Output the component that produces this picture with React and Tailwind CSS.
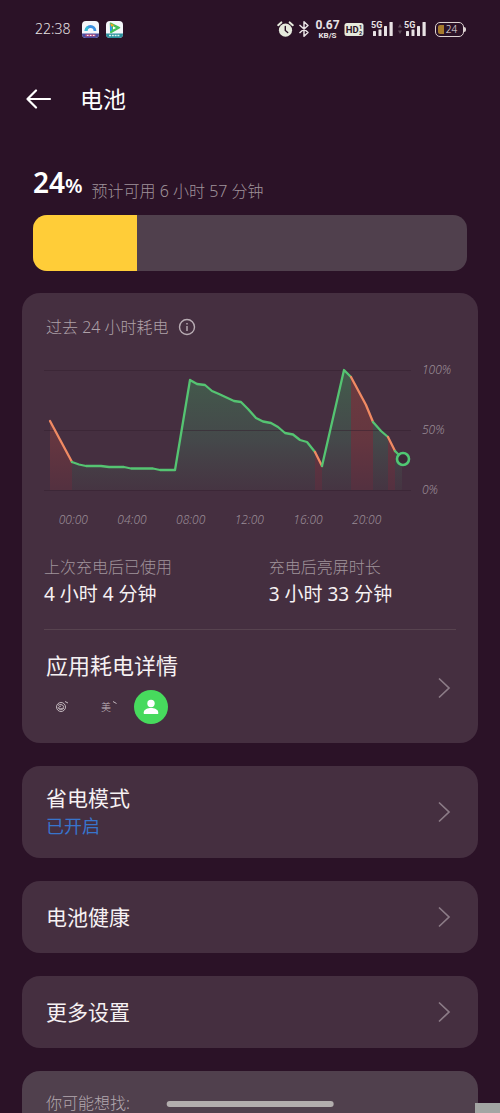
import React from "react";

const LEVELS = [
  { label: "100%", at: "items-start" },
  { label: "50%", at: "items-center" },
  { label: "0%", at: "items-end" },
];

const HOURS = ["00:00", "04:00", "08:00", "12:00", "16:00", "20:00"];

const SEGMENTS = [
  { tone: "heavy", points: [[6, 57], [28, 98]] },
  {
    tone: "normal",
    points: [
      [28, 98], [35, 100.5], [42, 102], [57, 102], [65, 103], [80, 103], [87, 104.5], [109, 104.5],
      [116, 106], [131, 106], [146, 16], [153, 20], [161, 21], [168, 27], [175, 30], [190, 37],
      [197, 38], [204, 45], [212, 54], [219, 57.5], [227, 59], [234, 63], [241, 69], [249, 70.5],
      [256, 76], [263, 78], [271, 88],
    ],
  },
  { tone: "heavy", points: [[271, 88], [278, 102]] },
  { tone: "normal", points: [[278, 102], [300, 6], [307, 13]] },
  { tone: "heavy", points: [[307, 13], [322, 41], [329, 58]] },
  { tone: "normal", points: [[329, 58], [337, 67], [344, 73]] },
  { tone: "heavy", points: [[344, 73], [351, 87]] },
  { tone: "normal", points: [[351, 87], [358, 94]] },
];

const toLine = (points) => points.map(([x, y]) => `${x},${y}`).join(" ");
const toArea = (points) =>
  `${points[0][0]},126 ${toLine(points)} ${points[points.length - 1][0]},126`;

function UsageChart() {
  return (
    <svg viewBox="0 0 368 132" className="block h-auto w-full" role="img" aria-label="过去 24 小时电量曲线">
      <defs>
        <linearGradient id="normal" gradientUnits="userSpaceOnUse" x1="0" y1="6" x2="0" y2="126">
          <stop offset="0" stopColor="#3f9a5c" stopOpacity="0.42" />
          <stop offset="0.6" stopColor="#44705a" stopOpacity="0.38" />
          <stop offset="1" stopColor="#4a6656" stopOpacity="0.1" />
        </linearGradient>
        <linearGradient id="heavy" gradientUnits="userSpaceOnUse" x1="0" y1="6" x2="0" y2="126">
          <stop offset="0" stopColor="#b8543f" stopOpacity="0.34" />
          <stop offset="0.6" stopColor="#a04440" stopOpacity="0.34" />
          <stop offset="1" stopColor="#a03a40" stopOpacity="0.16" />
        </linearGradient>
      </defs>
      {SEGMENTS.map((s, i) => (
        <polygon key={i} points={toArea(s.points)} fill={`url(#${s.tone})`} />
      ))}
      {[6.5, 66.5, 126.5].map((y) => (
        <line key={y} x1="0" x2="367" y1={y} y2={y} stroke="#35202f" strokeWidth="1" opacity="0.5" />
      ))}
      {SEGMENTS.map((s, i) => (
        <polyline
          key={i}
          points={toLine(s.points)}
          fill="none"
          stroke={s.tone === "heavy" ? "#f08a63" : "#55c472"}
          strokeWidth="2.3"
          strokeLinejoin="round"
          strokeLinecap="round"
        />
      ))}
      <circle cx="359" cy="95" r="6" fill="#3a2a37" stroke="#50c873" strokeWidth="2.6" />
    </svg>
  );
}

function Chevron() {
  return (
    <svg viewBox="0 0 14 22" className="mr-[5px] h-[22px] w-[14px] shrink-0" fill="none" stroke="#8c7c87" strokeWidth="1.7" aria-hidden="true">
      <path d="M2 1.5 12 11 2 20.5" />
    </svg>
  );
}

function Signal() {
  return (
    <svg viewBox="0 0 23 18" className="h-[18px] w-[23px]" fill="#e8e2e4" role="img" aria-label="5G 信号">
      <text x="0" y="8" fontSize="9" fontWeight="700" fontFamily="Roboto, sans-serif">5G</text>
      <rect x="2" y="11" width="3" height="5" rx="0.5" />
      <rect x="7.500" y="9.500" width="3" height="6.500" rx="0.5" />
      <rect x="13" y="6" width="3" height="10" rx="0.5" />
      <rect x="18.500" y="2" width="3.200" height="14" rx="0.5" />
    </svg>
  );
}

function StatusBar() {
  return (
    <div className="flex h-[58px] shrink-0 items-center pr-9 pl-[35px] text-[#e8e2e4]">
      <span className="w-[47px] text-sm">22:38</span>
      <svg viewBox="0 0 17 17" className="h-[17px] w-[17px]" aria-hidden="true">
        <rect width="17" height="17" rx="4" fill="#f4f6fa" />
        <path d="M4 10a4.500 4.500 0 1 1 9 0" fill="none" stroke="#3b8fe0" strokeWidth="2.800" />
        <path d="M4 10a4.500 4.500 0 0 1 2.200-3.900" fill="none" stroke="#37bcd0" strokeWidth="2.800" />
        <path d="M0 12.500h17v.5a4 4 0 0 1-4 4H4a4 4 0 0 1-4-4z" fill="#4b4a9c" />
        <path d="M3.500 13.500h10v1.800h-10z" fill="#d9547a" />
        <path d="M5 14.400h1.500M8 14.400h1.500M11 14.400h1.500" stroke="#fff" strokeWidth="1" />
      </svg>
      <svg viewBox="0 0 17 17" className="ml-[7px] h-[17px] w-[17px]" aria-hidden="true">
        <rect width="17" height="17" rx="4" fill="#f4f6fa" />
        <path d="M4.500 2.200 13.500 6.600 4.800 11.500z" fill="#43bf5a" stroke="#43bf5a" strokeWidth="1.500" strokeLinejoin="round" />
        <path d="M4 3v7.500l2-1.200V4z" fill="#2b9be8" />
        <path d="M4.300 2.200 8.500 4.300 5 5.800z" fill="#f5a623" />
        <path d="M7 5.200 10 6.900 7 8.600z" fill="#fff" />
        <path d="M0 12.500h17v.5a4 4 0 0 1-4 4H4a4 4 0 0 1-4-4z" fill="#2a8f9c" />
        <path d="M3 14.500h11" stroke="#d8f3f0" strokeWidth="1.500" strokeDasharray="2 0.800" />
      </svg>
      <div className="ml-auto flex items-center">
        <svg viewBox="0 0 17 17" className="h-[17px] w-[17px]" aria-hidden="true">
          <circle cx="8.500" cy="9.200" r="6.600" fill="#e6eadd" />
          <path d="M1.200 4.200 4.300 1.400M15.800 4.200 12.700 1.400" stroke="#e6eadd" strokeWidth="2" strokeLinecap="round" />
          <path d="M8.300 5.500v4l2.400 2" fill="none" stroke="#2b1227" strokeWidth="1.400" strokeLinecap="round" />
        </svg>
        <svg viewBox="0 0 12 18" className="ml-1 h-[18px] w-[12px]" fill="none" stroke="#e8e2e4" strokeWidth="1.500" strokeLinejoin="round" aria-hidden="true">
          <path d="M1.500 5 10 12.500 6 16.200V1.800L10 5.500 1.500 13" />
        </svg>
        <span className="ml-1.5 flex w-[23px] flex-col items-center font-[Roboto] font-bold">
          <span className="text-[12px] leading-[12px]">0.67</span>
          <span className="text-[8px] leading-[9px]">KB/S</span>
        </span>
        <svg viewBox="0 0 20 13" className="ml-[5px] h-[13px] w-[20px]" role="img" aria-label="HD 1 2">
          <rect x="0.500" width="19" height="13" rx="2.500" fill="#e6eadd" />
          <text x="1.800" y="10.200" fontSize="9.500" fontWeight="700" fontFamily="Roboto, sans-serif" fill="#2b1227">HD</text>
          <text x="15" y="6" fontSize="5.500" fontWeight="700" fontFamily="Roboto, sans-serif" fill="#2b1227">1</text>
          <text x="15" y="11.600" fontSize="5.500" fontWeight="700" fontFamily="Roboto, sans-serif" fill="#2b1227">2</text>
        </svg>
        <span className="ml-[7px] flex"><Signal /></span>
        <svg viewBox="0 0 4 10" className="ml-1 h-[10px] w-[4px]" fill="#5c4a58" aria-hidden="true">
          <path d="M2 0 4 3.500H0zM2 10 0 6.500h4z" />
        </svg>
        <span className="ml-[2px] flex"><Signal /></span>
        <span className="relative ml-2 flex h-[15px] w-[29px] items-center justify-center rounded-[5px] border border-[#ddd2d2]">
          <span className="absolute top-[2px] bottom-[2px] left-[2px] w-[6px] rounded-l-[2px] bg-[#a67a2c]" />
          <span className="relative ml-1 text-[10px] leading-none">24</span>
          <span className="absolute top-1 -right-[3px] h-[5px] w-[2px] rounded-r bg-[#ddd2d2]" />
        </span>
      </div>
    </div>
  );
}

function Stat({ label, value }) {
  return (
    <div>
      <dt className="text-base leading-6 text-[#a0939b]">{label}</dt>
      <dd className="text-[19px] leading-[30px] font-normal text-[#f6f1f3]">{value}</dd>
    </div>
  );
}

function LinkCard({ title, note }) {
  return (
    <a href="#" className="flex items-center rounded-[18px] bg-[#452f40] py-[18px] pr-[22px] pl-6">
      <span className="flex min-h-9 flex-1 flex-col justify-center">
        <span className="text-[21px] leading-7 font-normal text-[#f6f1f3]">{title}</span>
        {note && <span className="text-lg leading-7 font-normal text-[#3874cc]">{note}</span>}
      </span>
      <Chevron />
    </a>
  );
}

export default function App() {
  return (
    <div className="flex h-dvh flex-col overflow-hidden bg-[#2b1227] font-['Noto_Sans','Noto_Sans_CJK_SC',sans-serif] font-light">
      <StatusBar />
      <header className="flex h-[82px] shrink-0 items-center px-[26px] text-white">
        <button type="button" aria-label="返回" className="flex">
          <svg viewBox="0 0 26 20" className="h-5 w-[26px]" fill="none" stroke="#fff" strokeWidth="2.200" strokeLinecap="round" strokeLinejoin="round">
            <path d="M10 1.500 1.500 10l8.500 8.500M1.500 10H24" />
          </svg>
        </button>
        <h1 className="ml-7 text-[23px] leading-8 font-normal">电池</h1>
      </header>

      <section className="shrink-0 px-[33px] pt-5">
        <p className="flex h-[55px] items-end pb-3">
          <span className="text-[28px] leading-[42px] font-semibold text-white">
            24<span className="text-xl">%</span>
          </span>
          <span className="ml-[9px] text-base leading-6 text-[#a0939b]">预计可用 6 小时 57 分钟</span>
        </p>
        <div role="progressbar" aria-label="电量" aria-valuenow={24} aria-valuemin={0} aria-valuemax={100} className="h-14 overflow-hidden rounded-[14px] bg-[#50404d]">
          <div className="h-full w-[24%] bg-[#ffcd38]" />
        </div>
      </section>

      <main className="mt-[22px] flex flex-1 flex-col gap-[23px] px-[22px]">
        <section className="rounded-[18px] bg-[#452f40] px-[22px] pt-[22px] pb-[19px]">
          <div className="flex h-6 items-center gap-[9px] px-[2px] text-[#aea1a8]">
            <h2 className="text-base">过去 24 小时耗电</h2>
            <button type="button" aria-label="说明" className="flex">
              <svg viewBox="0 0 18 18" className="h-[18px] w-[18px]" fill="none" stroke="#b9adb4" strokeWidth="1.400">
                <circle cx="9" cy="9" r="7.500" />
                <path d="M9 8v5M9 5v1.600" />
              </svg>
            </button>
          </div>

          <div className="mt-[25px] flex text-xs text-[#9a8c96] italic">
            <div className="flex-1">
              <UsageChart />
              <div className="mt-[14px] grid grid-cols-6 pr-4 text-center leading-5">
                {HOURS.map((h) => <span key={h}>{h}</span>)}
              </div>
            </div>
            <div className="grid h-[132px] w-11 grid-rows-3 pl-[10px] leading-3">
              {LEVELS.map((l) => <span key={l.label} className={`flex ${l.at}`}>{l.label}</span>)}
            </div>
          </div>

          <dl className="mt-[25px] grid grid-cols-[6fr_5fr]">
            <Stat label="上次充电后已使用" value="4 小时 4 分钟" />
            <Stat label="充电后亮屏时长" value="3 小时 33 分钟" />
          </dl>

          <a href="#" className="mt-5 flex items-center border-t border-[#57434f] pt-[21px]">
            <span className="flex-1">
              <span className="block px-[2px] text-[22px] leading-7 font-normal text-[#f6f1f3]">应用耗电详情</span>
              <span className="mt-[11px] flex gap-[11px]">
                <svg viewBox="0 0 34 34" className="h-[34px] w-[34px]" fill="none" stroke="#c3b8be" strokeWidth="1" aria-hidden="true">
                  <circle cx="17" cy="17" r="4.500" />
                  <path d="M14 15.500c1-1.500 5-1.200 5.500.8s-2.500 3.200-4 2.200-.3-2.400 1.500-2.200M14 17.500c.5 2.500 4 3 6 .5" />
                  <path d="M21 11.500l3 1.500" />
                </svg>
                <span className="relative flex h-[34px] w-[34px] items-center justify-center text-[10px] text-[#c3b8be]">
                  美
                  <svg viewBox="0 0 4 4" className="absolute top-[11px] right-[6px] h-1 w-1" fill="none" stroke="#c3b8be" strokeWidth="1" aria-hidden="true">
                    <path d="M0 .5l3.500 2" />
                  </svg>
                </span>
                <svg viewBox="0 0 34 34" className="h-[34px] w-[34px]" aria-hidden="true">
                  <circle cx="17" cy="17" r="17" fill="#47da5d" />
                  <circle cx="17" cy="13.500" r="3.700" fill="#fff" />
                  <path d="M9.800 24v-1.800c0-2.800 4.200-4.200 7.200-4.200s7.200 1.400 7.200 4.200V24z" fill="#fff" />
                </svg>
              </span>
            </span>
            <Chevron />
          </a>
        </section>

        <LinkCard title="省电模式" note="已开启" />
        <LinkCard title="电池健康" />
        <LinkCard title="更多设置" />

        <section className="flex-1 rounded-t-[18px] bg-[#50404d] px-6 pt-[22px]">
          <h2 className="text-base leading-5 text-[#b3a8af]">你可能想找:</h2>
        </section>
      </main>

      <div className="fixed bottom-1.5 left-1/2 h-1.5 w-1/3 -translate-x-1/2 rounded-full bg-[#b3aeae]" />
      <div className="fixed right-0 bottom-0 h-[10px] w-[25px] bg-[#a3a5a3]" />
    </div>
  );
}
